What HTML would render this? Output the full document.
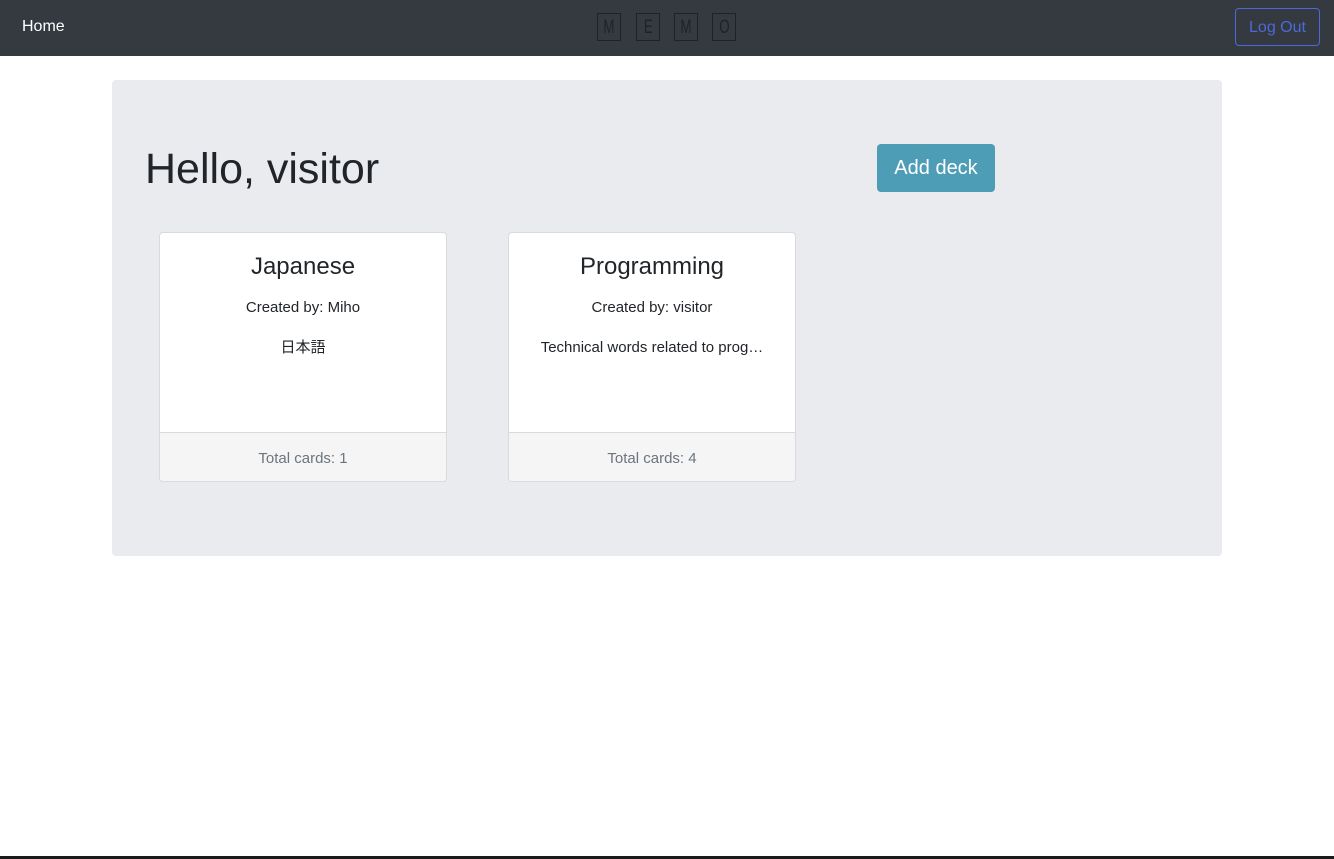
<!DOCTYPE html>
<html><head><style>
body{margin:0;width:1334px;height:859px;background:#fff;font-family:"Liberation Sans","Noto Sans CJK JP",sans-serif;position:relative;overflow:hidden;color:#212529}
nav{position:absolute;left:0;top:0;width:1334px;height:56px;background:#343a40}
.home{position:absolute;left:22px;top:18px;color:#fff;font-size:16px}
.logo span{position:absolute;top:13px;width:22px;height:26px;border:1px solid #222;color:#222;font-size:19px;text-align:center;line-height:27px}
.logo span i{font-style:normal;display:inline-block;transform:scaleX(.7)}
.logout{position:absolute;left:1235px;top:8px;width:83px;height:36px;border:1px solid #4b6ad8;border-radius:4px;color:#4b6ad8;font-size:16px;line-height:38px;text-align:center}
.jumbo{position:absolute;left:112px;top:80px;width:1110px;height:476px;background:#e9ebef;border-radius:4px}
h1{position:absolute;left:33px;top:65px;margin:0;font-size:43px;font-weight:normal;color:#212529}
.add{position:absolute;left:765px;top:64px;width:118px;height:48px;background:#4e9db6;color:#fff;border-radius:4px;font-size:20px;line-height:48px;text-align:center}
.card{position:absolute;top:152px;width:286px;height:248px;background:#fff;border:1px solid #d9dadc;border-radius:4px;text-align:center;overflow:hidden}
.card h3{margin:20px 0 0;font-size:24px;font-weight:normal;line-height:28px}
.card p{margin:16px 0 0;font-size:15px;line-height:22px}
.card p+p{margin-top:18px}
.foot{position:absolute;left:0;bottom:0;width:100%;height:48px;background:#f5f5f6;border-top:1px solid #d9dadc;color:#6c757d;font-size:15px;line-height:52px}
.bot{position:absolute;left:0;top:856px;width:1334px;height:3px;background:#1a1a1a}
</style></head><body>
<nav><div class="home">Home</div>
<div class="logo"><span style="left:597px"><i>M</i></span><span style="left:636px"><i>E</i></span><span style="left:674px"><i>M</i></span><span style="left:712px"><i>O</i></span></div>
<div class="logout">Log Out</div></nav>
<div class="jumbo"><h1>Hello, visitor</h1><div class="add">Add deck</div>
<div class="card" style="left:47px"><h3>Japanese</h3><p>Created by: Miho</p><p>日本語</p><div class="foot">Total cards: 1</div></div>
<div class="card" style="left:396px"><h3>Programming</h3><p>Created by: visitor</p><p>Technical words related to prog…</p><div class="foot">Total cards: 4</div></div>
</div>
<div class="bot"></div>
</body></html>
